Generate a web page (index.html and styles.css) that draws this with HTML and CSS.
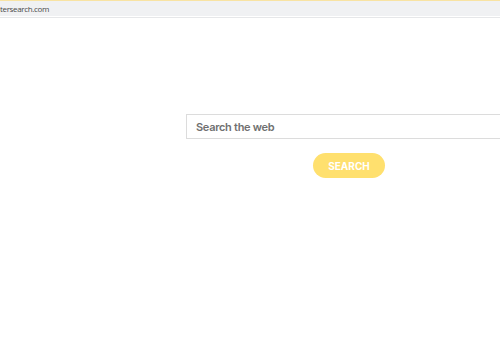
FILE: index.html
```html
<!doctype html>
<html lang="en">
  <head>
    <meta charset="UTF-8" />
    <meta name="viewport" content="width=device-width, initial-scale=1.0" />
    <title>Search</title>
    <link rel="stylesheet" href="styles.css">
  </head>
  <body>
    <div class="topline"></div>
    <div class="addressbar">tersearch.com</div>
    <div class="divider"></div>
    <div class="page">
      <form class="search" onsubmit="event.preventDefault();">
        <input class="search-input" type="text" placeholder="Search the web" />
        <button class="search-btn" type="submit">SEARCH</button>
      </form>
    </div>
  </body>
</html>
```

FILE: styles.css
```css
body {
  margin: 0;
  background: #fff;
  font-family: "Open Sans", "Liberation Sans", sans-serif;
  overflow: hidden;
}
.topline {
  height: 1px;
  background: #f8e3a3;
}
.addressbar {
  height: 15px;
  background: #f0f1f3;
  font-size: 8px;
  letter-spacing: -0.35px;
  line-height: 15px;
  color: #4a4a4a;
}
.divider {
  height: 1px;
  margin-top: 1px;
  background: #e6e7e9;
}
.page {
  padding-left: 186px;
  padding-top: 96px;
}
.search {
  width: 326px;
  display: flex;
  flex-direction: column;
  align-items: center;
}
.search-input {
  box-sizing: border-box;
  width: 100%;
  height: 25px;
  border: 1px solid #dcdcdc;
  padding: 0 9px;
  font-family: "Inter", sans-serif;
  font-size: 11px;
  font-weight: 600;
  letter-spacing: -0.3px;
  color: #666;
  outline: none;
}
.search-input::placeholder {
  color: #707070;
}
.search-btn {
  margin-top: 14px;
  width: 72px;
  height: 25px;
  border: none;
  border-radius: 13px;
  background: #ffe06e;
  color: #fff;
  font-family: "Inter", sans-serif;
  font-weight: 700;
  font-size: 10px;
  cursor: pointer;
}
```
